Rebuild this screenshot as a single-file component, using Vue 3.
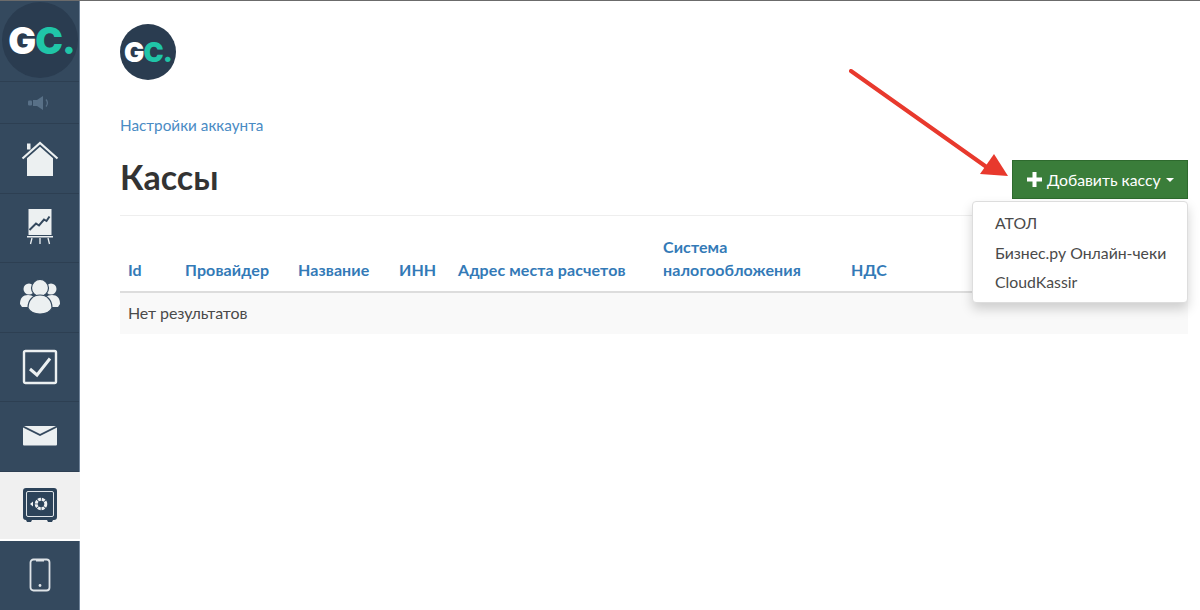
<script setup>
const columns = [
  { key: 'id', label: 'Id' },
  { key: 'provider', label: 'Провайдер' },
  { key: 'name', label: 'Название' },
  { key: 'inn', label: 'ИНН' },
  { key: 'address', label: 'Адрес места расчетов' },
  { key: 'tax', label: 'Система налогообложения' },
  { key: 'vat', label: 'НДС' }
]
const providers = ['АТОЛ', 'Бизнес.ру Онлайн-чеки', 'CloudKassir']
</script>

<template>
  <div class="page">
    <aside class="sidebar">
      <div class="brand">
        <div class="logo logo-big"><span class="g">G</span><span class="c">C.</span></div>
      </div>
      <div class="nav-row nav-speaker">
        <svg width="24" height="16" viewBox="0 0 24 16">
          <rect x="0" y="5.500" width="4" height="5" rx="1" fill="#587087" />
          <path d="M5 5h4l6-4v14l-6-4H5z" fill="#587087" />
          <path d="M18 4.500c1.600 2 1.600 5 0 7" fill="none" stroke="#587087" stroke-width="1.300" />
        </svg>
      </div>
      <div class="nav-row">
        <svg class="icon-home" width="38" height="36" viewBox="0 0 38 36">
          <path d="M6 14 19 3l13 11v21H6z" fill="#ecf0f1" />
          <path d="M1.500 18 19 2.500 36.500 18" fill="none" stroke="#34495e" stroke-width="5" />
          <path d="M1.500 17.500 19 2 36.500 17.500" fill="none" stroke="#ecf0f1" stroke-width="2.200" />
          <rect x="6" y="2.500" width="3.500" height="6" fill="#ecf0f1" />
        </svg>
      </div>
      <div class="nav-row">
        <svg width="28" height="38" viewBox="0 0 28 38">
          <rect x="2.500" y="0" width="23" height="26" fill="#ecf0f1" />
          <path d="M3.500 21 10 14.500l3 2 5-6 2.500 1.500 3-4.500" fill="none" stroke="#34495e" stroke-width="2" />
          <rect x="1" y="27" width="26" height="1.500" fill="#ecf0f1" />
          <path d="M6 29 4.500 35M14 29v6M22 29l1.500 6" stroke="#ecf0f1" stroke-width="1.300" />
        </svg>
      </div>
      <div class="nav-row">
        <svg width="42" height="36" viewBox="0 0 42 36">
          <circle cx="10" cy="10" r="5.500" fill="#ecf0f1" />
          <circle cx="32" cy="10" r="5.500" fill="#ecf0f1" />
          <path d="M1 25c0-6 3-9 8-9s8 3 8 9l-2 3-12 0z" fill="#ecf0f1" />
          <path d="M41 25c0-6-3-9-8-9s-8 3-8 9l2 3 12 0z" fill="#ecf0f1" />
          <circle cx="21" cy="9" r="8.500" fill="#ecf0f1" stroke="#34495e" stroke-width="1.200" />
          <path d="M9 29c0-8 5-13 12-13s12 5 12 13c-2 4-7 6-12 6s-10-2-12-6z" fill="#ecf0f1" stroke="#34495e" stroke-width="1.200" />
        </svg>
      </div>
      <div class="nav-row">
        <svg width="36" height="36" viewBox="0 0 36 36">
          <rect x="2" y="2" width="32" height="32" rx="1.500" fill="none" stroke="#ecf0f1" stroke-width="2.400" />
          <path d="M8 20 15 26 28 9.500" fill="none" stroke="#ecf0f1" stroke-width="3" />
        </svg>
      </div>
      <div class="nav-row">
        <svg width="34" height="20" viewBox="0 0 34 20">
          <path d="M0 1.500 17 10 34 1.500V18.500a1 1 0 0 1-1 1H1a1 1 0 0 1-1-1z" fill="#ecf0f1" />
          <path d="M1 0h32L17 8z" fill="#ecf0f1" />
        </svg>
      </div>
      <div class="nav-row nav-active">
        <svg width="34" height="34" viewBox="0 0 34 34">
          <path d="M3 0h28a3 3 0 0 1 3 3v26a3 3 0 0 1-3 3h-1l-1 2h-4l-1-2H9l-1 2H4l-1-2a3 3 0 0 1-3-3V3a3 3 0 0 1 3-3z" fill="#2c435a" />
          <rect x="3.500" y="3.500" width="27" height="25" rx="1.500" fill="none" stroke="#dfe4e8" stroke-width="1" />
          <circle cx="18" cy="16" r="4.800" fill="none" stroke="#f0f2f3" stroke-width="3" stroke-dasharray="3 .8" />
          <path d="M7 16l3-2.500v5z" fill="#f0f2f3" />
        </svg>
      </div>
      <div class="nav-row">
        <svg width="22" height="34" viewBox="0 0 22 34">
          <rect x="1.500" y="1.500" width="19" height="31" rx="3" fill="none" stroke="#dfe4e8" stroke-width="1.800" />
          <rect x="7" y="1.500" width="8" height="2" fill="#dfe4e8" />
          <circle cx="11" cy="27.500" r="1.400" fill="#dfe4e8" />
        </svg>
      </div>
    </aside>

    <main class="content">
      <div class="logo logo-small"><span class="g">G</span><span class="c">C.</span></div>
      <a class="crumb">Настройки аккаунта</a>
      <header class="head">
        <h1>Кассы</h1>
        <div class="add-wrap">
          <button class="add">
            <svg width="15" height="15" viewBox="0 0 15 15"><path d="M5.500 0h4v5.500H15v4H9.500V15h-4V9.500H0v-4h5.500z" fill="#fff" /></svg>
            <span>Добавить кассу</span>
            <i class="caret"></i>
          </button>
          <ul class="menu">
            <li v-for="p in providers" :key="p">{{ p }}</li>
          </ul>
        </div>
      </header>
      <table class="grid">
        <colgroup>
          <col v-for="c in columns" :key="c.key" :class="'col-' + c.key" />
        </colgroup>
        <thead>
          <tr><th v-for="c in columns" :key="c.key"><a>{{ c.label }}</a></th></tr>
        </thead>
        <tbody>
          <tr><td :colspan="columns.length">Нет результатов</td></tr>
        </tbody>
      </table>
    </main>

    <svg class="arrow" width="170" height="120" viewBox="0 0 170 120">
      <path d="M2 2 146 104" stroke="#e8392d" stroke-width="4" stroke-linecap="round" fill="none" />
      <path d="M159 107 145 85 131 105z" fill="#e8392d" />
    </svg>
  </div>
</template>

<style>
html, body { margin: 0; background: #fff; }
</style>

<style scoped>
.page {
  position: relative;
  display: flex;
  height: 610px;
  overflow: hidden;
  box-sizing: border-box;
  border-top: 1px solid #6b6b6b;
  font-family: "Lato", "Open Sans", sans-serif;
  color: #333;
}
.sidebar {
  width: 80px;
  flex: none;
  margin-top: -1px;
  box-sizing: border-box;
  background: #34495e;
  border-right: 1px solid #70849a;
}
.brand {
  height: 82px;
  box-sizing: border-box;
  padding: 2px 0 0 2px;
  border-bottom: 1px solid #2d3f52;
}
.logo {
  display: flex;
  align-items: center;
  justify-content: center;
  border-radius: 50%;
  background: #2a3c50;
  font-family: "Inter", sans-serif;
  font-weight: 900;
}
.logo-big { width: 76px; height: 76px; box-sizing: border-box; padding-left: 3px; font-size: 37px; letter-spacing: -1px; }
.logo-small { width: 56px; height: 56px; font-size: 27px; letter-spacing: -0.800px; }
.g { color: #fff; }
.c { color: #20c5a8; }
.nav-row {
  height: 69.5px;
  box-sizing: border-box;
  display: flex;
  align-items: center;
  justify-content: center;
  border-bottom: 1px solid #2d3f52;
}
.icon-home { margin-top: 2px; }
.nav-speaker { height: 42px; }
.nav-active {
  background: #f0f0f0;
  border-bottom: 2px solid #fff;
  margin-right: -1px;
}
.content {
  flex: 1;
  min-width: 0;
  padding: 23px 12px 0 40px;
}
.crumb {
  display: block;
  margin-top: 35px;
  font-size: 15.3px;
  line-height: 20px;
  color: #4a8bc4;
}
.head {
  display: flex;
  justify-content: space-between;
  align-items: flex-start;
  margin-top: 15px;
  height: 65px;
  border-bottom: 1px solid #eeeeee;
}
h1 {
  margin: 0;
  padding-top: 7px;
  font-size: 34px;
  line-height: 40px;
  font-weight: 700;
  color: #333;
}
.add-wrap { position: relative; margin-top: 10px; }
.add {
  display: flex;
  align-items: center;
  gap: 5px;
  width: 176px;
  height: 39px;
  box-sizing: border-box;
  padding: 0 0 0 14px;
  background: #3a7d3a;
  border: 1px solid #2e6a2e;
  color: #fff;
  font: 15.8px "Lato", "Open Sans", sans-serif;
}
.caret {
  margin-left: 0;
  border-top: 4px solid #fff;
  border-left: 4px solid transparent;
  border-right: 4px solid transparent;
}
.menu {
  position: absolute;
  top: 41px;
  right: 0;
  z-index: 2;
  width: 216px;
  height: 102px;
  box-sizing: border-box;
  margin: 0;
  padding: 6px 0;
  list-style: none;
  background: #fff;
  border: 1px solid #dddddd;
  border-radius: 4px;
  box-shadow: 0 6px 12px rgba(0, 0, 0, 0.175);
}
.menu li {
  padding-left: 22px;
  font-size: 15.8px;
  line-height: 29.500px;
  color: #4a4a4a;
  white-space: nowrap;
}
.grid {
  width: 100%;
  margin-top: 19px;
  table-layout: fixed;
  border-collapse: collapse;
  font-size: 16px;
}
.col-id { width: 57px; }
.col-provider { width: 113px; }
.col-name { width: 101px; }
.col-inn { width: 59px; }
.col-address { width: 205px; }
.col-tax { width: 188px; }
th {
  padding: 0 8px 10px;
  vertical-align: bottom;
  text-align: left;
  line-height: 23px;
  font-weight: 700;
  letter-spacing: 0.100px;
  color: #337ab7;
  border-bottom: 2px solid #dddddd;
}
td {
  padding: 0 8px 3px;
  height: 42px;
  box-sizing: border-box;
  background: #f9f9f9;
  color: #4a4a4a;
  letter-spacing: -0.100px;
}
.arrow {
  position: absolute;
  left: 849px;
  top: 68px;
}
</style>
